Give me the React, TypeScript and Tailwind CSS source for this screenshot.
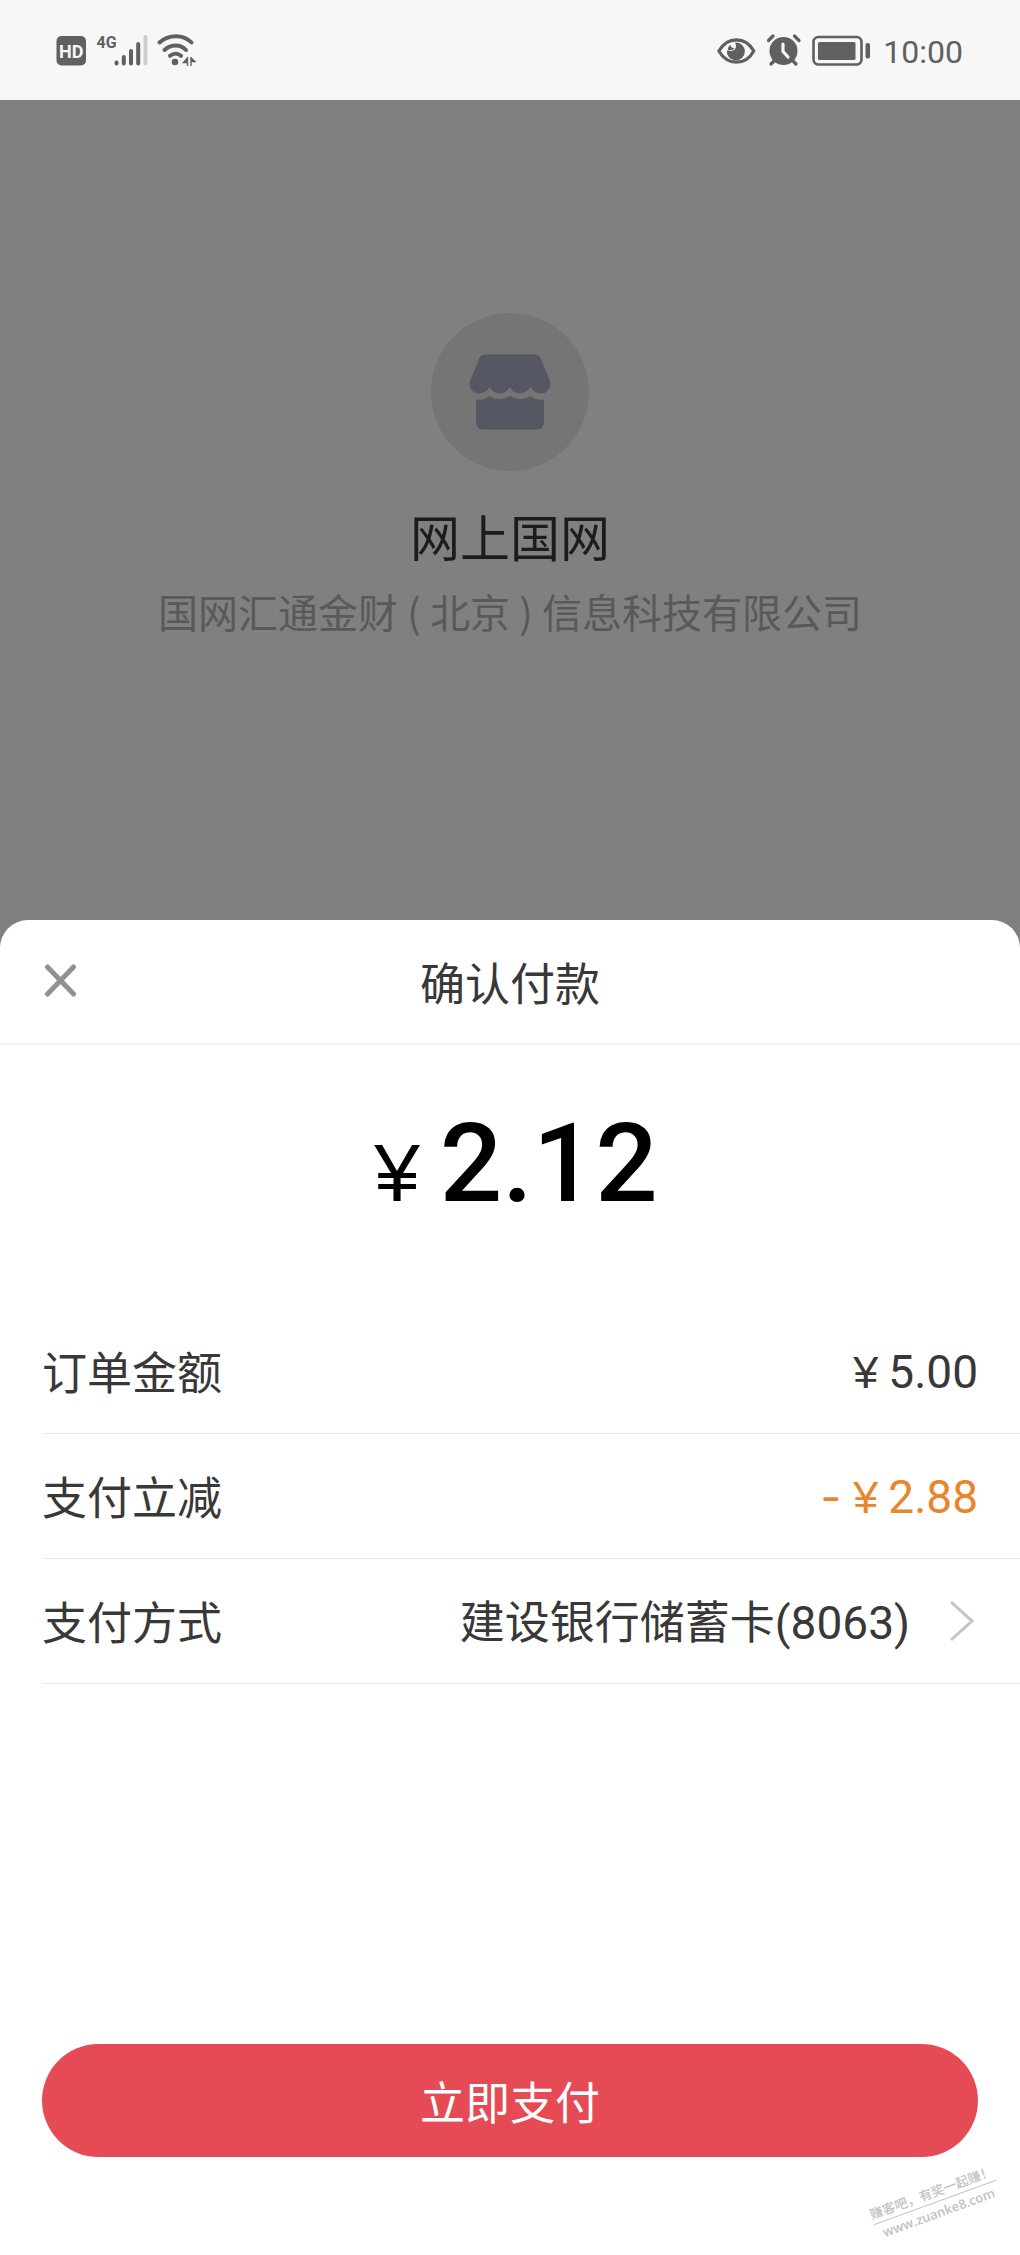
import React from 'react';

type DetailRow = {
  label: string;
  value: string;
  minus?: boolean;
};

const rows: DetailRow[] = [
  { label: '订单金额', value: '5.00' },
  { label: '支付立减', value: '2.88', minus: true },
];

const StatusBar: React.FC = () => (
  <header className="flex h-[100px] shrink-0 items-center justify-between bg-[#f7f7f7] pl-14 pr-[57px] text-[#606060]">
    <svg width="140" height="36" viewBox="0 0 140 36" fill="none" aria-label="HD 4G Wi-Fi">
      <rect x="0.500" y="4" width="29.500" height="29.500" rx="5" fill="currentColor" />
      <text x="15.200" y="25.500" textAnchor="middle" fontFamily="Roboto, sans-serif" fontSize="18" fontWeight="700" fill="#f7f7f7">HD</text>
      <text x="40.500" y="16" fontFamily="Roboto, sans-serif" fontSize="16" fontWeight="700" fill="currentColor">4G</text>
      <g stroke="currentColor" strokeWidth="4" strokeLinecap="round">
        <path d="M60.500 30.500v1M67.800 25v6.500M75 19v12.500M82.200 12v19.500" />
        <path d="M89.500 5v26.500" stroke="#cfcfcf" />
      </g>
      <g stroke="currentColor" strokeWidth="4" strokeLinecap="round">
        <path d="M103.500 10.500c9-8.500 24-8.500 32 0" />
        <path d="M108.500 18c6.500-6 16-6 21.500 0" />
        <path d="M114 23.800c3.500-2.800 8-2.800 11 0" />
      </g>
      <circle cx="119" cy="30" r="3.300" fill="currentColor" />
      <path d="M131.500 25v9M131.500 26l-4 4.500h4M135 25v9M135 26l4 3.500h-4" fill="currentColor" stroke="currentColor" strokeWidth="1.400" />
    </svg>

    <div className="flex items-center">
      <svg width="154" height="34" viewBox="0 0 154 34" fill="none" aria-label="电量">
        <path d="M1.800 18C6 11 12 6.800 19.200 6.800S33 11 36.800 18C33 25 26.500 29.200 19.200 29.200S6 25 1.800 18z" stroke="currentColor" strokeWidth="3.200" strokeLinejoin="round" />
        <path d="M18 9.500A9 9 0 1 1 10 17C12 18.500 17.500 18.800 18.800 14.500C19.300 12.500 18.800 11 18 9.500z" fill="currentColor" />
        <path d="M11 17Q10.500 13.500 13.500 12Q14 15.500 17.500 15Q15.500 18 11 17z" fill="currentColor" />
        <circle cx="66.500" cy="18" r="14" fill="currentColor" />
        <path d="M66 11v7.500l5 5.500" stroke="#f7f7f7" strokeWidth="3.200" strokeLinecap="round" strokeLinejoin="round" />
        <path d="M51.500 7.500l4.500-4.500M77.500 3l4.500 4.500M54 31l4-4M79 31l-4-4" stroke="currentColor" strokeWidth="3.200" strokeLinecap="round" />
        <rect x="96.500" y="4" width="48" height="27.500" rx="5" stroke="currentColor" strokeWidth="2.600" />
        <rect x="101" y="9" width="37.500" height="18" rx="1.500" fill="currentColor" />
        <rect x="148.500" y="10" width="4.500" height="15.500" rx="2" fill="currentColor" />
      </svg>
      <time className="ml-3 pt-1 font-['Roboto',sans-serif] text-[32px] leading-9">10:00</time>
    </div>
  </header>
);

const Merchant: React.FC = () => (
  <section className="flex flex-1 flex-col items-center px-10 pt-[213px] pb-60 text-center">
    <div className="flex size-[158px] items-center justify-center rounded-full bg-[#757575]">
      <svg width="82" height="76" viewBox="0 0 82 76" fill="#555862" aria-hidden="true">
        <path d="M16 0.500H66Q70 0.500 71.500 4L81 27Q82.500 31 80 35Q77 39.500 72 39.500Q65 39.500 61.500 33Q57 39.500 50.500 39.500Q44 39.500 41 33Q37 39.500 31 39.500Q24.500 39.500 20.500 33Q17 39.500 10 39.500Q5 39.500 2 35Q-0.500 31 1 27L10.500 4Q12 0.500 16 0.500Z" />
        <path d="M7 45.500Q15 46.500 20.500 42Q30.500 48.500 41 42Q51.500 48.500 61.500 42Q67 46.500 75 45.500V68Q75 75.500 67.500 75.500H14.500Q7 75.500 7 68Z" />
      </svg>
    </div>
    <h1 className="mt-8 text-[50px] leading-[64px] text-[#1c1c1c]">网上国网</h1>
    <p className="mt-4 text-[40px] leading-[56px] text-[#595959]">
      国网汇通金财<span className="inline-block w-8">(</span>北京<span className="inline-block w-8">)</span>信息科技有限公司
    </p>
  </section>
);

const PaySheet: React.FC = () => (
  <section className="relative rounded-t-[28px] bg-white pb-[98px] text-[#383838]">
    <div className="grid h-[125px] grid-cols-[1fr_auto_1fr] items-center border-b-2 border-[#f3f3f3] px-[42px]">
      <button type="button" aria-label="关闭" className="w-9">
        <svg width="36" height="36" viewBox="0 0 36 36" fill="none" stroke="#919191" strokeWidth="5" strokeLinecap="round">
          <path d="M5.500 3l26 27M31.500 3l-26 27" />
        </svg>
      </button>
      <h2 className="text-[45px] leading-[60px]">确认付款</h2>
    </div>

    <p className="flex h-[264px] items-baseline justify-center pt-[54px] pl-3 leading-[130px] text-black">
      <span className="mr-5 font-['Liberation_Sans',sans-serif] text-[82px]">¥</span>
      <span className="font-['Roboto',sans-serif] text-[110px] font-medium">2.12</span>
    </p>

    <dl className="ml-[42px] text-[45px] leading-[60px]">
      {rows.map(row => (
        <div key={row.label} className="flex h-[125px] items-center justify-between border-b border-[#ececec] pr-[42px]">
          <dt>{row.label}</dt>
          <dd className={row.minus ? 'text-[#e8862e]' : ''}>
            {row.minus && <span className="mr-3 font-['Inter',sans-serif]">-</span>}
            <span className="mr-2.5 font-['Liberation_Sans',sans-serif]">¥</span>
            <span className="font-['Roboto',sans-serif] text-[46px]">{row.value}</span>
          </dd>
        </div>
      ))}
      <div className="flex h-[125px] items-center justify-between border-b border-[#ececec] pr-[42px]">
        <dt>支付方式</dt>
        <dd className="flex">
          <button type="button" className="flex items-center gap-10">
            <span>建设银行储蓄卡<span className="font-['Roboto',sans-serif] text-[46px]">(8063)</span></span>
            <svg width="28" height="44" viewBox="0 0 28 44" fill="none" stroke="#c4c4c4" strokeWidth="3">
              <path d="M1 3l21 19L1 41" />
            </svg>
          </button>
        </dd>
      </div>
    </dl>

    <div className="px-[42px] pt-[360px]">
      <button type="button" className="h-[113px] w-full rounded-full bg-[#e64a55] text-[45px] text-white">
        立即支付
      </button>
    </div>

    <div className="absolute right-5 bottom-8 -rotate-[20deg] text-center text-[13px] leading-5 text-[#c2c2c2]">
      <p className="border-b border-[#c6c6c6] font-medium">赚客吧，有奖一起赚！</p>
      <p className="font-['Open_Sans',sans-serif] font-semibold">www.zuanke8.com</p>
    </div>
  </section>
);

export default function App() {
  return (
    <div className="flex min-h-screen flex-col bg-[#808080] font-['Noto_Sans_CJK_SC',sans-serif]">
      <StatusBar />
      <main className="flex flex-1 flex-col">
        <Merchant />
        <PaySheet />
      </main>
    </div>
  );
}
